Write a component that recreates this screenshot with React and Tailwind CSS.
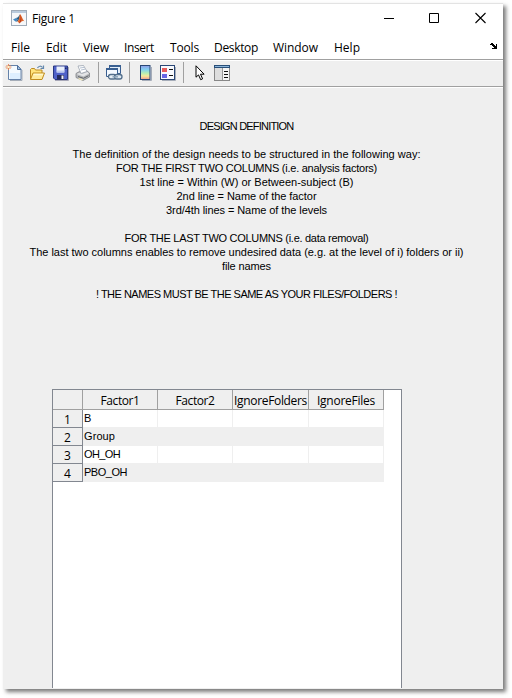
import { useLayoutEffect, useRef } from "react";

// Single line of text whose tracking is adjusted so that it fills `width` pixels.
function Fit({ children, width }) {
  const ref = useRef(null);
  useLayoutEffect(() => {
    const el = ref.current;
    el.style.letterSpacing = "0px";
    const natural = el.getBoundingClientRect().width;
    el.style.letterSpacing = `${(width - natural) / children.length}px`;
  }, [children, width]);
  return (
    <span ref={ref} className="inline-block whitespace-pre">
      {children}
    </span>
  );
}

const menus = [
  ["File", 19, "w-[35px]"],
  ["Edit", 21, "w-[37px]"],
  ["View", 26, "w-[41px]"],
  ["Insert", 30, "w-[46px]"],
  ["Tools", 29, "w-[44px]"],
  ["Desktop", 44, "w-[59px]"],
  ["Window", 45, "w-[61px]"],
  ["Help", 26, "w-[40px]"],
];

const lines = [
  ["DESIGN DEFINITION", 94],
  null,
  ["The definition of the design needs to be structured in the following way:", 348],
  ["FOR THE FIRST TWO COLUMNS (i.e. analysis factors)", 261],
  ["1st line = Within (W) or Between-subject (B)", 214],
  ["2nd line = Name of the factor", 140],
  ["3rd/4th lines = Name of the levels", 161],
  null,
  ["FOR THE LAST TWO COLUMNS (i.e. data removal)", 244],
  ["The last two columns enables to remove undesired data (e.g. at the level of i) folders or ii)", 434],
  ["file names", 49],
  null,
  ["! THE NAMES MUST BE THE SAME AS YOUR FILES/FOLDERS !", 301],
];

const rows = [
  ["B", 7],
  ["Group", 31],
  ["OH_OH", 36],
  ["PBO_OH", 43],
];

function MatlabIcon() {
  return (
    <svg width="16" height="16" viewBox="0 0 16 16">
      <rect x=".5" y=".5" width="15" height="15" fill="#f6f8fa" stroke="#9fabb8" />
      <path d="M1 1h14v2H1z" fill="#b9cbdd" />
      <path d="M2 9.500 5 8l1.800 1.400-2.300 2z" fill="#3f86c2" />
      <path d="M5 8 7 7.200 9 4.300 8.400 9 6.200 11.600 4.500 11.400 6.800 9.400z" fill="#275a80" />
      <path d="M9 4c1 .5 2.500 5.300 4.500 7.500-1.500-.8-2.500-.4-3.500.6L8 13.500c-.3-1.200-.9-1.700-1.800-1.900C8.200 10.300 8.500 6 9 4z" fill="#e0662a" />
      <path d="M9.300 4.500c.8 2.500.4 6-1.300 9l1.700-1.500c1.200-2 .6-5.200-.4-7.500z" fill="#b5361a" />
    </svg>
  );
}

function NewIcon() {
  return (
    <svg className="overflow-visible" width="17" height="17" viewBox="0 0 17 17">
      <path d="M4 16.500h12V6" fill="none" stroke="#a5adb8" />
      <path d="M2.500 1.500h9l3.500 4v10H2.500z" fill="#f4faff" stroke="#6582a9" />
      <path d="M4 9h10v6H4z" fill="#deefff" />
      <path d="M11.500 1.500V5.500H15z" fill="#a9c9e9" stroke="#4f6f9d" />
      <path d="M2.500 0v6M-.5 3h6M.5 1l4 4M4.500 1l-4 4" stroke="#e98653" strokeWidth=".9" />
      <rect x="1.500" y="2" width="2" height="2" fill="#fff4cb" />
    </svg>
  );
}

function OpenIcon() {
  return (
    <svg width="17" height="16" viewBox="0 0 17 16">
      <path d="M1.500 14V4.500l1-1h3l1 1.500h6.500v9z" fill="#ffe47c" stroke="#bd8a22" />
      <path d="M1.500 14.500 4 8H15.500L13 14.500z" fill="#ffeb9c" stroke="#c08d20" />
      <path d="M4.800 8.800h9.500l-.5 1.500H4.300z" fill="#fff8cf" />
      <path d="M8.500 3c1-2 3.500-2.500 5-.5M14.500.5v3h-3" fill="none" stroke="#6488ad" strokeWidth="1.200" />
    </svg>
  );
}

function SaveIcon() {
  return (
    <svg width="16" height="16" viewBox="0 0 16 16">
      <path d="M2 15.500h13.500V2" fill="none" stroke="#a8a8b8" />
      <path d="M.5 1h14v13.500H2L.5 13z" fill="#4f61c8" stroke="#283780" />
      <path d="M3.500 1.500h8v6h-8z" fill="#e9effb" />
      <path d="M4 5.500h7v2H4z" fill="#bdcaf0" />
      <path d="M4 10h7v4.500H4z" fill="#242b5c" />
      <path d="M8.500 10.500h2v3.500h-2z" fill="#f2f2f6" />
      <path d="M12 2.500h1.500V4H12z" fill="#1e285c" />
    </svg>
  );
}

function PrintIcon() {
  return (
    <svg width="16" height="16" viewBox="0 0 16 16">
      <path d="M1 8.500 4.500 6.500l2 1 5-2 3 2.500v4L8 15.500 1 12.500z" fill="#b4b6b9" stroke="#808388" strokeWidth=".8" />
      <path d="M3 1 8.500.5 12 6.500 6 8.500z" fill="#fff" stroke="#9ba3b0" strokeWidth=".8" />
      <path d="m5 3 4-.6M6 5l4-.8" stroke="#b5c1d2" />
      <path d="m1.500 9 7 2.500 5.500-3-1.500-1.500L7 9 4 8z" fill="#e4e5e7" />
      <path d="m3 11.500 5.500 1.800 5-2.600" fill="none" stroke="#606469" />
      <path d="m4 13 4.500 1.500-1.500 1-4-1.500z" fill="#f1e8b8" />
    </svg>
  );
}

function LinkIcon() {
  return (
    <svg width="18" height="17" viewBox="0 0 18 17">
      <path d="M3.500 1.500h11v8h-11z" fill="#e4effa" stroke="#395f91" />
      <path d="M3 1h12v2H3z" fill="#395f91" />
      <path d="M.5 4.500h11v8H.5z" fill="#f4f9ff" stroke="#395f91" />
      <path d="M0 4h12v2H0z" fill="#395f91" />
      <rect x="2.500" y="10.500" width="7.500" height="4.500" rx="2.200" fill="#e6eef5" stroke="#536f8c" strokeWidth="1.300" />
      <rect x="8.500" y="10.500" width="7.500" height="4.500" rx="2.200" fill="#dce7f0" stroke="#536f8c" strokeWidth="1.300" />
      <path d="M6.500 12.800H12" stroke="#8ba3b9" strokeWidth="1.500" />
    </svg>
  );
}

function ColorbarIcon() {
  return (
    <svg width="12" height="16" viewBox="0 0 12 16">
      <defs>
        <linearGradient id="cb" x1="0" y1="0" x2="0" y2="1">
          <stop offset="0" stopColor="#8e9be9" />
          <stop offset=".3" stopColor="#82d2ef" />
          <stop offset=".55" stopColor="#b4eeb4" />
          <stop offset=".75" stopColor="#f6ea9b" />
          <stop offset="1" stopColor="#f09a8c" />
        </linearGradient>
      </defs>
      <path d="M2 15.500h9.500V2" fill="none" stroke="#a6adb9" />
      <rect x=".5" y=".5" width="9.500" height="14" fill="url(#cb)" stroke="#294675" />
    </svg>
  );
}

function LegendIcon() {
  return (
    <svg width="16" height="16" viewBox="0 0 16 16">
      <path d="M2 15.500h13.500V2" fill="none" stroke="#a6adb9" />
      <rect x=".5" y=".5" width="14" height="14" fill="#f7f9fd" stroke="#294675" />
      <path d="M2 3h5v4H2z" fill="#e65c5c" />
      <path d="M2 9h5v4H2z" fill="#6666e4" />
      <path d="M9 4.500h4M9 10.500h4" stroke="#111" />
    </svg>
  );
}

function ArrowIcon() {
  return (
    <svg width="10" height="16" viewBox="0 0 10 16">
      <path d="M1 .8v11.400l2.500-2.300 2.200 4.800 1.900-.9L5.500 9.200h3.600z" fill="#fff" stroke="#000" />
    </svg>
  );
}

function PanelIcon() {
  return (
    <svg width="16" height="16" viewBox="0 0 16 16">
      <rect x=".5" y=".5" width="15" height="15" fill="#f5f5f5" stroke="#888" />
      <path d="M0 0h16v3H0z" fill="#294f78" />
      <path d="M1 1h14v1H1z" fill="#8cb5da" />
      <path d="M1 3h7v12H1z" fill="#dedede" />
      <path d="M8.500 3v12" stroke="#999" />
      <path d="M10 6.500h4M10 9.500h4M10 12.500h4" stroke="#111" />
    </svg>
  );
}

function Separator({ className }) {
  return <div className={`h-[21px] w-px shrink-0 bg-[#a0a0a0] ${className}`} />;
}

function HeadCell({ text, fit, className }) {
  return (
    <div className={`flex h-5 items-center justify-center border-r border-b border-[#a0a0a0] pt-[3px] ${className}`}>
      {text && <Fit width={fit}>{text}</Fit>}
    </div>
  );
}

export default function App() {
  return (
    <div className="h-[698px] w-[512px] overflow-hidden bg-white pt-[3px] pl-[3px] text-black">
      <div className="flex h-[686px] w-[500px] flex-col bg-[#efefef] shadow-[3px_3px_4px_rgba(0,0,0,0.52)]">
        <div className="flex h-[29px] shrink-0 items-center border-t border-[#e3e3e3] bg-white pl-2 font-['Open_Sans','Noto_Sans',sans-serif] text-[12px] leading-4">
          <MatlabIcon />
          <div className="ml-[5px] pt-[2px]">
            <Fit width={43}>Figure 1</Fit>
          </div>
          <svg className="ml-auto" width="107" height="12" viewBox="0 0 107 12" fill="none" stroke="#000">
            <path d="M0 6.500h10" />
            <path d="M45.500 1.500h9v9h-9z" />
            <path d="m91.500 1 10 10M101.500 1l-10 10" strokeWidth="1.100" />
          </svg>
          <div className="w-[12px]" />
        </div>
        <div className="flex h-[27px] shrink-0 items-center bg-white pt-1 pl-2 font-['Open_Sans','Noto_Sans',sans-serif] text-[12px] leading-4">
          {menus.map(([name, fit, box]) => (
            <div key={name} className={`shrink-0 ${box}`}>
              <Fit width={fit}>{name}</Fit>
            </div>
          ))}
          <svg className="mr-[5px] mb-[3px] ml-auto" width="8" height="6" viewBox="0 0 8 6" shapeRendering="crispEdges">
            <path d="M0 1h1V0h2v1h1v1h1v1h1V1h1v5H2V5h2V4H3V3H2V2H0z" />
          </svg>
        </div>
        <div className="flex h-[27px] shrink-0 items-center border-t border-[#a0a0a0] pb-px pl-[3px] shadow-[inset_0_1px_0_#fff]">
          <NewIcon />
          <div className="ml-[6px]"><OpenIcon /></div>
          <div className="ml-[7px]"><SaveIcon /></div>
          <div className="ml-[6px]"><PrintIcon /></div>
          <Separator className="mr-[7px] ml-[7px]" />
          <LinkIcon />
          <Separator className="mr-[10px] ml-[5px]" />
          <ColorbarIcon />
          <div className="ml-[8px]"><LegendIcon /></div>
          <Separator className="mr-[11px] ml-[7px]" />
          <ArrowIcon />
          <div className="ml-[9px]"><PanelIcon /></div>
        </div>
        <div className="h-[2px] shrink-0 border-t border-[#a0a0a0] bg-white" />
        <div className="flex h-[301px] w-[487px] shrink-0 flex-col items-center pt-[31px] font-['Liberation_Sans',Arial,sans-serif] text-[11px] leading-[14px]">
          {lines.map((line, i) => (
            <div key={i} className="h-[14px] shrink-0 whitespace-nowrap">
              {line && <Fit width={line[1]}>{line[0]}</Fit>}
            </div>
          ))}
        </div>
        <div className="ml-[49px] h-[299px] w-[350px] shrink-0 border-x border-t border-[#828790] bg-white">
          <div className="flex w-[331px] bg-[#efefef] font-['Open_Sans','Noto_Sans',sans-serif] text-[12px] leading-4">
            <HeadCell className="w-[30px]" />
            <HeadCell className="w-[75px]" text="Factor1" fit={39} />
            <HeadCell className="w-[75px]" text="Factor2" fit={39} />
            <HeadCell className="w-[76px]" text="IgnoreFolders" fit={73} />
            <HeadCell className="w-[75px]" text="IgnoreFiles" fit={58} />
          </div>
          {rows.map(([name, fit], i) => (
            <div key={name} className="flex h-[18px] w-[331px]">
              <div className="flex w-[30px] items-center justify-center border-r border-b border-[#828790] bg-[#efefef] pt-[3px] font-['Open_Sans','Noto_Sans',sans-serif] text-[12px] leading-4">
                {i + 1}
              </div>
              {["w-[75px]", "w-[75px]", "w-[76px]", "w-[75px]"].map((w, c) => (
                <div
                  key={c}
                  className={`${w} border-r border-b border-[#efefef] pl-px font-['Liberation_Sans',Arial,sans-serif] text-[11px] leading-[17px] ${i % 2 ? "bg-[#efefef]" : "bg-white"}`}
                >
                  {c === 0 && <Fit width={fit}>{name}</Fit>}
                </div>
              ))}
            </div>
          ))}
        </div>
      </div>
    </div>
  );
}
